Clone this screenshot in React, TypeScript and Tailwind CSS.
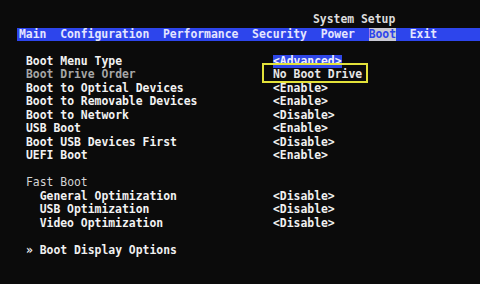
const menu = ["Main", "Configuration", "Performance", "Security", "Power", "Boot", "Exit"];

type Row = { label: string; value?: string; dim?: boolean; indent?: boolean; kind?: "sel" | "boxed" | "head" | "sub" };

const bootRows: Row[] = [
  { label: "Boot Menu Type", value: "<Advanced>", kind: "sel" },
  { label: "Boot Drive Order", value: "No Boot Drive", dim: true, kind: "boxed" },
  { label: "Boot to Optical Devices", value: "<Enable>" },
  { label: "Boot to Removable Devices", value: "<Enable>" },
  { label: "Boot to Network", value: "<Disable>" },
  { label: "USB Boot", value: "<Enable>" },
  { label: "Boot USB Devices First", value: "<Disable>" },
  { label: "UEFI Boot", value: "<Enable>" },
];

const fastRows: Row[] = [
  { label: "General Optimization", value: "<Disable>" },
  { label: "USB Optimization", value: "<Disable>" },
  { label: "Video Optimization", value: "<Disable>" },
];

const SettingRow = ({ row, indent }: { row: Row; indent?: boolean }) => {
  return (
    <div className="flex h-[13.5px] items-center">
      <div className={`w-[247px] shrink-0 font-bold ${indent ? "pl-[13.7px]" : ""} ${row.dim ? "text-[#a6a6a6]" : "text-[#f2f2f2]"}`}>
        {row.label}
      </div>
      {row.kind === "sel" && (
        <span className="bg-[#2f47e8] px-0 font-bold text-[#eef0ff]">{row.value}</span>
      )}
      {row.kind === "boxed" && (
        <span className="relative font-bold text-[#e6e6e6]">
          {row.value}
          <span className="absolute left-[-11px] top-[-5px] h-[20px] w-[106px] border-2 border-[#e3e23a]" />
        </span>
      )}
      {!row.kind && <span className="font-bold text-[#f0f0f0]">{row.value}</span>}
    </div>
  );
};

export default function App() {
  return (
    <div className="w-[480px] h-[284px] overflow-hidden bg-[#0b0b0b] font-['DejaVu_Sans_Mono',monospace] text-[11.4px] leading-[13.5px] pt-[13px] whitespace-pre">
      {/* title */}
      <div className="h-[13.5px] pl-[313px] text-[#dcdcdc] font-bold">System Setup</div>

      {/* menu bar */}
      <div className="mt-[1.5px] ml-[17px] flex h-[13px] items-center gap-[13.7px] bg-[#2d45ec] pl-[2px] font-bold text-[#e4e6ff]">
        {menu.map((m) =>
          m === "Boot" ? (
            <span key={m} className="bg-[#c9c9d4] text-[#2d45ec]">{m}</span>
          ) : (
            <span key={m}>{m}</span>
          )
        )}
      </div>

      {/* settings */}
      <div className="mt-[13.5px] pl-[26px]">
        {bootRows.map((r) => (
          <SettingRow key={r.label} row={r} />
        ))}
        <div className="h-[13.5px]" />
        <div className="h-[13.5px] text-[#d4d4d4]">Fast Boot</div>
        {fastRows.map((r) => (
          <SettingRow key={r.label} row={r} indent />
        ))}
        <div className="h-[13.5px]" />
        <div className="h-[13.5px] font-bold text-[#f0f0f0]">» Boot Display Options</div>
      </div>
    </div>
  );
}
